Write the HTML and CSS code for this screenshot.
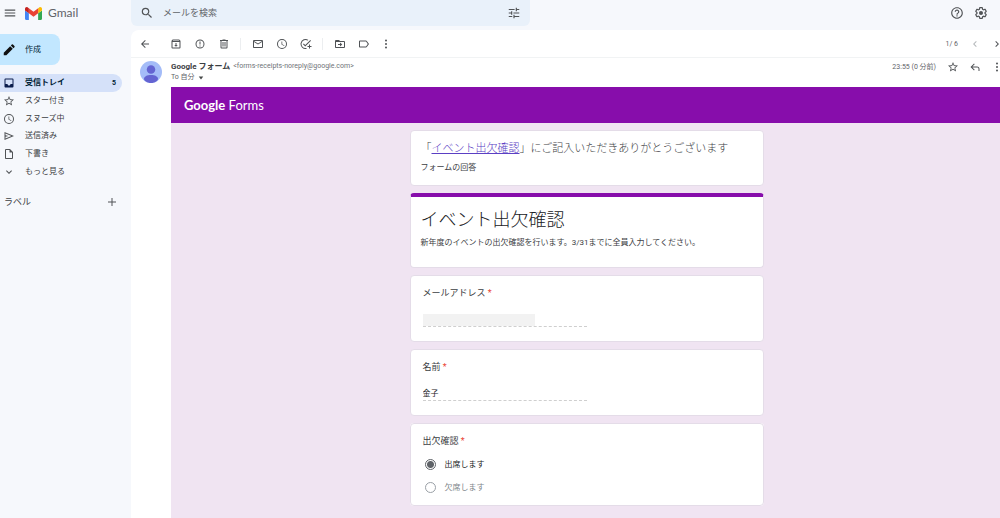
FILE: index.html
```html
<!DOCTYPE html>
<html lang="ja">
<head>
<meta charset="utf-8">
<meta name="viewport" content="width=device-width, initial-scale=1">
<title>Gmail</title>
<link rel="stylesheet" href="styles.css">
</head>
<body>
<div class="app">
  <header class="topbar">
    <div class="brand">
      <button class="icon-btn menu" type="button" aria-label="メインメニュー"><svg class="icon large" viewBox="0 0 24 24"><path d="M3 18h18v-2H3v2zm0-5h18v-2H3v2zm0-7v2h18V6H3z"/></svg></button>
      <svg class="gmail-mark" viewBox="52 42 88 66" aria-hidden="true">
        <path fill="#4285f4" d="M58 108h14V74L52 59v43c0 3.32 2.69 6 6 6"/>
        <path fill="#34a853" d="M120 108h14c3.32 0 6-2.69 6-6V59l-20 15"/>
        <path fill="#fbbc04" d="M120 48v26l20-15v-8c0-7.42-8.47-11.65-14.4-7.2"/>
        <path fill="#ea4335" d="M72 74V48l24 18 24-18v26L96 92"/>
        <path fill="#c5221f" d="M52 51v8l20 15V48l-5.6-4.2c-5.94-4.45-14.4-.22-14.4 7.2"/>
      </svg>
      <span class="brand-name">Gmail</span>
    </div>
    <form class="search">
      <button class="icon-btn" type="button" aria-label="検索"><svg class="icon large" viewBox="0 0 24 24"><path d="M15.5 14h-.79l-.28-.27A6.47 6.47 0 0 0 16 9.5 6.5 6.5 0 1 0 9.5 16c1.61 0 3.09-.59 4.23-1.57l.27.28v.79l5 4.99L20.49 19l-4.99-5zm-6 0C7.01 14 5 11.99 5 9.5S7.01 5 9.5 5 14 7.01 14 9.5 11.99 14 9.5 14z"/></svg></button>
      <input class="search-input" type="text" placeholder="メールを検索" aria-label="メールを検索">
      <button class="icon-btn" type="button" aria-label="検索オプション"><svg class="icon large" viewBox="0 0 24 24"><path d="M3 17v2h6v-2H3zM3 5v2h10V5H3zm10 16v-2h8v-2h-8v-2h-2v6h2zM7 9v2H3v2h4v2h2V9H7zm14 4v-2H11v2h10zm-6-4h2V7h4V5h-4V3h-2v6z"/></svg></button>
    </form>
    <div class="top-actions">
      <button class="icon-btn" type="button" aria-label="サポート"><svg class="icon large" viewBox="0 0 24 24"><path d="M11 18h2v-2h-2v2zm1-16C6.48 2 2 6.48 2 12s4.48 10 10 10 10-4.48 10-10S17.52 2 12 2zm0 18c-4.41 0-8-3.59-8-8s3.59-8 8-8 8 3.59 8 8-3.59 8-8 8zm0-14c-2.21 0-4 1.79-4 4h2c0-1.1.9-2 2-2s2 .9 2 2c0 2-3 1.75-3 5h2c0-2.25 3-2.5 3-5 0-2.21-1.79-4-4-4z"/></svg></button>
      <button class="icon-btn" type="button" aria-label="設定"><svg class="icon large" viewBox="0 0 24 24"><path d="M13.85 22.25h-3.7c-.74 0-1.36-.54-1.45-1.27l-.27-1.89c-.27-.14-.53-.29-.79-.46l-1.8.72c-.7.26-1.47-.03-1.81-.65L2.2 15.53c-.35-.66-.2-1.44.36-1.88l1.53-1.19c-.01-.15-.02-.3-.02-.46 0-.15.01-.31.02-.46l-1.52-1.19c-.59-.45-.74-1.26-.37-1.88l1.85-3.19c.34-.62 1.11-.9 1.79-.63l1.81.73c.26-.17.52-.32.78-.46l.27-1.91c.09-.7.71-1.25 1.44-1.25h3.7c.74 0 1.36.54 1.45 1.27l.27 1.89c.27.14.53.29.79.46l1.8-.72c.71-.26 1.48.03 1.82.65l1.84 3.18c.36.66.2 1.44-.36 1.88l-1.52 1.19c.01.15.02.3.02.46s-.01.31-.02.46l1.52 1.19c.56.45.72 1.23.37 1.86l-1.86 3.22c-.34.62-1.11.9-1.8.63l-1.8-.72c-.26.17-.52.32-.78.46l-.27 1.91c-.1.68-.72 1.22-1.46 1.22zm-3.23-2h2.76l.37-2.55.53-.22c.44-.18.88-.44 1.34-.78l.45-.34 2.38.96 1.38-2.4-2.03-1.58.07-.56c.03-.26.06-.51.06-.78s-.03-.53-.06-.78l-.07-.56 2.03-1.58-1.39-2.4-2.39.96-.45-.35c-.42-.32-.87-.58-1.33-.77l-.52-.22-.37-2.55h-2.76l-.37 2.55-.53.21c-.44.19-.88.44-1.34.79l-.45.33-2.38-.95-1.39 2.39 2.03 1.58-.07.56a7 7 0 0 0-.06.79c0 .26.02.53.06.78l.07.56-2.03 1.58 1.38 2.4 2.39-.96.45.35c.43.33.86.58 1.33.77l.53.22.38 2.55z"/><circle cx="12" cy="12" r="3.5"/></svg></button>
    </div>
  </header>

  <aside class="sidebar">
    <button class="compose" type="button"><svg class="icon large" viewBox="0 0 24 24"><path d="M3 16.500V21h4.500L18.500 10 14 5.500 3 16.500zM21.300 7.200a1.400 1.400 0 0 0 0-2l-2.500-2.500a1.400 1.400 0 0 0-2 0L15.200 4.300l4.500 4.500 1.600-1.600z"/></svg>作成</button>
    <nav class="folders">
      <a class="folder current" href="#inbox"><svg class="icon" viewBox="0 0 24 24"><path d="M19 3H5a2 2 0 0 0-2 2v14c0 1.100.9 2 2 2h14a2 2 0 0 0 2-2V5a2 2 0 0 0-2-2zm0 11h-4c0 1.660-1.350 3-3 3s-3-1.340-3-3H5V5h14v9z"/></svg><span class="folder-name">受信トレイ</span><span class="count">5</span></a>
      <a class="folder" href="#starred"><svg class="icon" viewBox="0 0 24 24"><path d="M22 9.240l-7.190-.62L12 2 9.190 8.630 2 9.240l5.460 4.730L5.820 21 12 17.270 18.180 21l-1.630-7.030L22 9.240zM12 15.400l-3.760 2.270 1-4.280-3.320-2.880 4.380-.38L12 6.100l1.710 4.040 4.380.38-3.320 2.880 1 4.280L12 15.400z"/></svg><span class="folder-name">スター付き</span></a>
      <a class="folder" href="#snoozed"><svg class="icon" viewBox="0 0 24 24"><path d="M12 2a10 10 0 1 0 0 20 10 10 0 0 0 0-20zm0 18a8 8 0 1 1 0-16 8 8 0 0 1 0 16zm.5-13H11v6l5.250 3.150.75-1.230-4.500-2.670z"/></svg><span class="folder-name">スヌーズ中</span></a>
      <a class="folder" href="#sent"><svg class="icon" viewBox="0 0 24 24"><path d="M3 20V4l19 8-19 8zm2-3 11.850-5L5 7v3.500l6 1.500-6 1.500V17z"/></svg><span class="folder-name">送信済み</span></a>
      <a class="folder" href="#drafts"><svg class="icon" viewBox="0 0 24 24"><path d="M14 2H6a2 2 0 0 0-2 2v16c0 1.100.9 2 2 2h12a2 2 0 0 0 2-2V8l-6-6zM6 20V4h7v5h5v11H6z"/></svg><span class="folder-name">下書き</span></a>
      <a class="folder" href="#more"><svg class="icon" viewBox="0 0 24 24"><path d="M7.410 8.590 12 13.170l4.590-4.580L18 10l-6 6-6-6 1.410-1.410z"/></svg><span class="folder-name">もっと見る</span></a>
    </nav>
    <div class="labels">
      <h2 class="labels-title">ラベル</h2>
      <button class="icon-btn" type="button" aria-label="新しいラベルを作成"><svg class="icon" viewBox="0 0 24 24"><path d="M20 13h-7v7h-2v-7H4v-2h7V4h2v7h7v2z"/></svg></button>
    </div>
  </aside>

  <main class="mail">
    <div class="toolbar">
      <button class="icon-btn back" type="button" aria-label="受信トレイに戻る"><svg class="icon" viewBox="0 0 24 24"><path d="M20 11H7.830l5.590-5.590L12 4l-8 8 8 8 1.410-1.410L7.830 13H20v-2z"/></svg></button>
      <div class="tool-group">
        <button class="icon-btn" type="button" aria-label="アーカイブ"><svg class="icon" viewBox="0 0 24 24"><path d="M20.500 5.200 19 3.500A1.500 1.500 0 0 0 18 3H6c-.5 0-.9.200-1.200.500L3.500 5.200C3.200 5.600 3 6 3 6.500V19a2 2 0 0 0 2 2h14a2 2 0 0 0 2-2V6.500c0-.5-.2-.9-.5-1.300zM6.200 5h11.600l.8 1H5.400l.8-1zM5 19V8h14v11H5zm6-9h2v4h2.500L12 17.500 8.500 14H11v-4z"/></svg></button>
        <button class="icon-btn" type="button" aria-label="迷惑メールを報告"><svg class="icon" viewBox="0 0 24 24"><path d="M12 3a9 9 0 1 0 0 18 9 9 0 0 0 0-18zm0 16a7 7 0 1 1 0-14 7 7 0 0 1 0 14zM11 7h2v6h-2zm0 8h2v2h-2z"/></svg></button>
        <button class="icon-btn" type="button" aria-label="削除"><svg class="icon" viewBox="0 0 24 24"><path d="M15 4V3H9v1H4v2h1v13a2 2 0 0 0 2 2h10a2 2 0 0 0 2-2V6h1V4h-5zm2 15H7V6h10v13zM9 8h2v9H9zm4 0h2v9h-2z"/></svg></button>
      </div>
      <div class="tool-group">
        <button class="icon-btn" type="button" aria-label="未読にする"><svg class="icon" viewBox="0 0 24 24"><path d="M20 4H4a2 2 0 0 0-2 2v12c0 1.100.9 2 2 2h16a2 2 0 0 0 2-2V6a2 2 0 0 0-2-2zm0 14H4V8l8 5 8-5v10zm-8-7L4 6h16l-8 5z"/></svg></button>
        <button class="icon-btn" type="button" aria-label="スヌーズ"><svg class="icon" viewBox="0 0 24 24"><path d="M12 2a10 10 0 1 0 0 20 10 10 0 0 0 0-20zm0 18a8 8 0 1 1 0-16 8 8 0 0 1 0 16zm.5-13H11v6l5.250 3.150.75-1.230-4.500-2.670z"/></svg></button>
        <button class="icon-btn" type="button" aria-label="ToDo リストに追加"><svg class="icon" viewBox="0 0 24 24"><path d="M11 20a8 8 0 1 1 4.300-14.800l1.450-1.450A10 10 0 1 0 13 21.800v-2.050c-.65.160-1.320.250-2 .250zM20.600 4 10.500 14.200l-3.100-3.100L6 12.500l4.500 4.500L22 5.400 20.600 4zM18 13v3h-3v2h3v3h2v-3h3v-2h-3v-3h-2z"/></svg></button>
      </div>
      <div class="tool-group">
        <button class="icon-btn" type="button" aria-label="移動"><svg class="icon" viewBox="0 0 24 24"><path d="M20 6h-8l-2-2H4a2 2 0 0 0-2 2v12c0 1.100.9 2 2 2h16a2 2 0 0 0 2-2V8a2 2 0 0 0-2-2zm0 12H4V8h16v10zm-8-1 4.500-4L12 9v3H8v2h4v3z"/></svg></button>
        <button class="icon-btn" type="button" aria-label="ラベル"><svg class="icon" viewBox="0 0 24 24"><path d="M17.630 5.840A2 2 0 0 0 16 5H4a2 2 0 0 0-2 2v10c0 1.100.9 2 2 2h12c.67 0 1.270-.33 1.630-.84L22 12l-4.370-6.160zM16 17H4V7h12l3.550 5L16 17z"/></svg></button>
        <button class="icon-btn more" type="button" aria-label="その他"><svg class="icon" viewBox="0 0 24 24"><circle cx="12" cy="5" r="2"/><circle cx="12" cy="12" r="2"/><circle cx="12" cy="19" r="2"/></svg></button>
      </div>
      <div class="tail">
        <span class="pager">1/ 6</span>
        <button class="icon-btn faint" type="button" aria-label="前へ"><svg class="icon" viewBox="0 0 24 24"><path d="M15.410 7.410 14 6l-6 6 6 6 1.410-1.410L10.830 12z"/></svg></button>
        <button class="icon-btn" type="button" aria-label="次へ"><svg class="icon" viewBox="0 0 24 24"><path d="M8.590 16.590 10 18l6-6-6-6-1.410 1.410L13.170 12z"/></svg></button>
      </div>
    </div>

    <article class="message">
      <header class="message-head">
        <svg class="avatar" viewBox="0 0 44 44" aria-hidden="true"><circle cx="22" cy="22" r="22" fill="#a4bcf8"/><circle cx="22" cy="17" r="8.500" fill="#6464d2"/><path fill="#6464d2" d="M22 28c8 0 14 3 14 8 0 3-6 8-14 8S8 39 8 36c0-5 6-8 14-8z"/></svg>
        <div class="sender">
          <div class="sender-line"><strong class="sender-name">Google フォーム</strong><span class="address">&lt;forms-receipts-noreply@google.com&gt;</span></div>
          <button class="recipient" type="button">To 自分 <svg class="caret" viewBox="0 0 8 8" aria-hidden="true"><path d="M1 2h6L4 6z"/></svg></button>
        </div>
        <div class="tail">
          <time class="date">23:55 (0 分前)</time>
          <button class="icon-btn" type="button" aria-label="スター"><svg class="icon" viewBox="0 0 24 24"><path d="M22 9.240l-7.190-.62L12 2 9.190 8.630 2 9.240l5.460 4.730L5.820 21 12 17.270 18.180 21l-1.630-7.030L22 9.240zM12 15.400l-3.760 2.270 1-4.280-3.320-2.880 4.380-.38L12 6.100l1.710 4.040 4.380.38-3.320 2.880 1 4.280L12 15.400z"/></svg></button>
          <button class="icon-btn" type="button" aria-label="返信"><svg class="icon" viewBox="0 0 24 24"><path d="M10 5 3 12l7 7 1.400-1.400L6.800 13H16c2 0 3 1 3 3v4h2v-4c0-3.200-1.800-5-5-5H6.800l4.600-4.600z"/></svg></button>
          <button class="icon-btn" type="button" aria-label="その他の操作"><svg class="icon" viewBox="0 0 24 24"><circle cx="12" cy="5" r="2"/><circle cx="12" cy="12" r="2"/><circle cx="12" cy="19" r="2"/></svg></button>
        </div>
      </header>

      <div class="forms">
        <div class="forms-banner"><span class="forms-google">Google</span> Forms</div>
        <form class="forms-body">
          <section class="card thanks">
            <h1 class="thanks-title">「<a class="form-link" href="#form">イベント出欠確認</a>」にご記入いただきありがとうございます</h1>
            <p class="note">フォームの回答</p>
          </section>
          <section class="card intro">
            <h2 class="form-title">イベント出欠確認</h2>
            <p class="description">新年度のイベントの出欠確認を行います。3/31までに全員入力してください。</p>
          </section>
          <section class="card question">
            <label class="question-title" for="email">メールアドレス <span class="required">*</span></label>
            <div class="answer"><input class="answer-input masked" id="email" type="text" readonly></div>
          </section>
          <section class="card question">
            <label class="question-title" for="name">名前 <span class="required">*</span></label>
            <div class="answer"><input class="answer-input" id="name" type="text" value="金子" readonly></div>
          </section>
          <fieldset class="card question choices">
            <legend class="question-title">出欠確認 <span class="required">*</span></legend>
            <label class="choice selected"><input class="radio" type="radio" name="attendance" checked>出席します</label>
            <label class="choice"><input class="radio" type="radio" name="attendance">欠席します</label>
          </fieldset>
        </form>
      </div>
    </article>
  </main>
</div>
</body>
</html>
```

FILE: styles.css
```css
* {
  box-sizing: border-box;
}

body {
  margin: 0;
  background: #f6f8fc;
  color: #3c4043;
  font-family: Roboto, "Noto Sans CJK JP", sans-serif;
  font-size: 8px;
  line-height: 12px;
}

h1, h2, p {
  margin: 0;
  font-weight: 400;
}

button, input {
  margin: 0;
  padding: 0;
  border: 0;
  background: none;
  color: inherit;
  font: inherit;
}

.app {
  display: grid;
  grid-template-columns: 131px minmax(0, 1fr);
  grid-template-rows: 30px 1fr;
  min-height: 100vh;
  overflow: hidden;
}

.icon {
  display: block;
  flex: none;
  width: 12px;
  height: 12px;
  fill: #505356;
}

.icon.large {
  width: 14px;
  height: 14px;
}

.icon-btn {
  display: flex;
  flex: none;
  align-items: center;
  justify-content: center;
  width: 24px;
  height: 24px;
}

.faint .icon {
  fill: #b4b7ba;
}

/* Top bar */
.topbar {
  grid-column: 1 / -1;
  display: grid;
  grid-template-columns: 131px minmax(0, 399px) 1fr;
  align-items: start;
}

.brand {
  display: flex;
  align-items: center;
  height: 26px;
}

.menu {
  width: 19px;
}

.gmail-mark {
  width: 17px;
  height: 13px;
  margin: 0 6px;
}

.brand-name {
  color: #5f6368;
  font-family: Lato, sans-serif;
  font-size: 12px;
}

.search {
  display: flex;
  align-items: center;
  height: 26px;
  padding: 0 4px;
  border-radius: 0 0 6px 6px;
  background: #e9f1fa;
}

.search-input {
  flex: 1;
  min-width: 0;
  margin-left: 4px;
  font-size: 9px;
}

.search-input::placeholder {
  color: #5f6368;
  opacity: 1;
}

.top-actions {
  display: flex;
  justify-content: flex-end;
  padding: 1px 7px 0 0;
}

/* Sidebar */
.compose {
  display: flex;
  align-items: center;
  gap: 9px;
  width: 60px;
  height: 31px;
  margin: 4px 0 9px;
  padding-left: 2px;
  border-radius: 0 8px 8px 0;
  background: #c2e7ff;
  color: #001d35;
}

.compose .icon {
  fill: #111;
}

.folders {
  display: grid;
  grid-auto-rows: 1fr;
  height: 107px;
  margin-right: 9px;
}

.folder {
  display: flex;
  align-items: center;
  gap: 10px;
  padding: 0 6px 0 3px;
  border-radius: 0 9px 9px 0;
  color: inherit;
  text-decoration: none;
}

.folder-name {
  flex: 1;
}

.folder.current {
  background: #d5e1f9;
  color: #001d35;
  font-weight: 700;
}

.folder.current .icon {
  fill: #0b1d4d;
}

.count {
  font-size: 7px;
}

.labels {
  display: flex;
  align-items: center;
  justify-content: space-between;
  margin-top: 9px;
  padding: 0 7px 0 4px;
}

.labels-title {
  font-size: 9px;
}

/* Message pane */
.mail {
  display: flex;
  flex-direction: column;
  min-width: 0;
  border-radius: 8px 0 0 0;
  background: #fff;
}

.toolbar {
  display: flex;
  align-items: center;
  height: 28px;
  padding-left: 2px;
  border-bottom: 1px solid #f1f3f4;
}

.back {
  margin-right: 7px;
}

.tool-group {
  display: flex;
}

.tool-group + .tool-group {
  margin-left: 4px;
  padding-left: 6px;
  background: linear-gradient(#eceef0, #eceef0) left center / 1px 12px no-repeat;
}

.more {
  width: 20px;
}

.tail {
  display: flex;
  align-items: center;
  margin: 0 -8px 0 auto;
  color: #5f6368;
  font-size: 7px;
}

.tail .icon-btn {
  width: 22px;
}

.pager,
.date {
  margin-right: 6px;
}

.message {
  display: flex;
  flex: 1;
  flex-direction: column;
}

.message-head {
  display: flex;
  align-items: flex-start;
  gap: 9px;
  height: 29px;
  padding: 3px 0 0 9px;
}

.message-head .tail .icon-btn {
  height: 12px;
}

.avatar {
  flex: none;
  width: 22px;
  height: 22px;
}

.sender {
  display: grid;
  grid-auto-rows: 11px;
  line-height: 11px;
}

.sender-line {
  display: flex;
  gap: 3px;
}

.sender-name {
  font-weight: 700;
}

.address {
  color: #6f7377;
  font-size: 7px;
}

.recipient {
  display: flex;
  align-items: center;
  gap: 3px;
  color: #5f6368;
  font-size: 7px;
}

.caret {
  width: 6px;
  height: 6px;
  fill: #444746;
}

/* Form receipt */
.forms {
  display: flex;
  flex: 1;
  flex-direction: column;
  margin-left: 40px;
  background: #f0e4f2;
}

.forms-banner {
  padding: 8px 13px;
  background: #870dab;
  color: #fff;
  font-family: Lato, sans-serif;
  font-size: 13px;
  line-height: 20px;
}

.forms-google {
  font-weight: 700;
}

.forms-body {
  display: grid;
  gap: 7px;
  width: 100%;
  max-width: 356px;
  margin: 7px auto 12px;
  padding-left: 2px;
}

.card {
  min-width: 0;
  margin: 0;
  border: 1px solid #e4dce8;
  border-radius: 4px;
  background: #fff;
}

.thanks {
  padding: 9px 10px 11px;
}

.thanks-title {
  font-size: 11px;
  font-weight: 300;
  line-height: 18px;
}

.note {
  margin-top: 4px;
}

.form-link {
  color: #5b3fc4;
}

.intro {
  padding: 8px 10px 18px;
  border-top: 4px solid #870dab;
}

.form-title {
  color: #202124;
  font-size: 18px;
  font-weight: 300;
  line-height: 29px;
}

.description {
  margin-top: 3px;
}

.question {
  padding: 10px 12px 14px;
}

.question-title {
  display: block;
  padding: 0;
  font-size: 9px;
  line-height: 14px;
}

.required {
  color: #ea4335;
}

.answer {
  display: flex;
  width: 50%;
  margin-top: 14px;
  border-bottom: 1px dashed #cfcfcf;
}

.answer-input {
  width: 100%;
  height: 12px;
  color: #202124;
  line-height: 12px;
}

.answer-input.masked {
  width: 112px;
  background: #f2f2f2;
}

.choices {
  padding-bottom: 6px;
}

.choices .question-title {
  float: left;
  width: 100%;
  margin-bottom: 5px;
}

.choice {
  display: flex;
  clear: both;
  align-items: center;
  gap: 9px;
  height: 23px;
  padding-left: 2px;
  color: #80868b;
}

.choice.selected {
  color: #202124;
}

.radio {
  width: 11px;
  height: 11px;
  border: 1px solid #9aa0a6;
  border-radius: 50%;
  appearance: none;
}

.radio:checked {
  border-color: #5f6368;
  background: radial-gradient(circle, #5f6368 3px, transparent 4px);
}
```
